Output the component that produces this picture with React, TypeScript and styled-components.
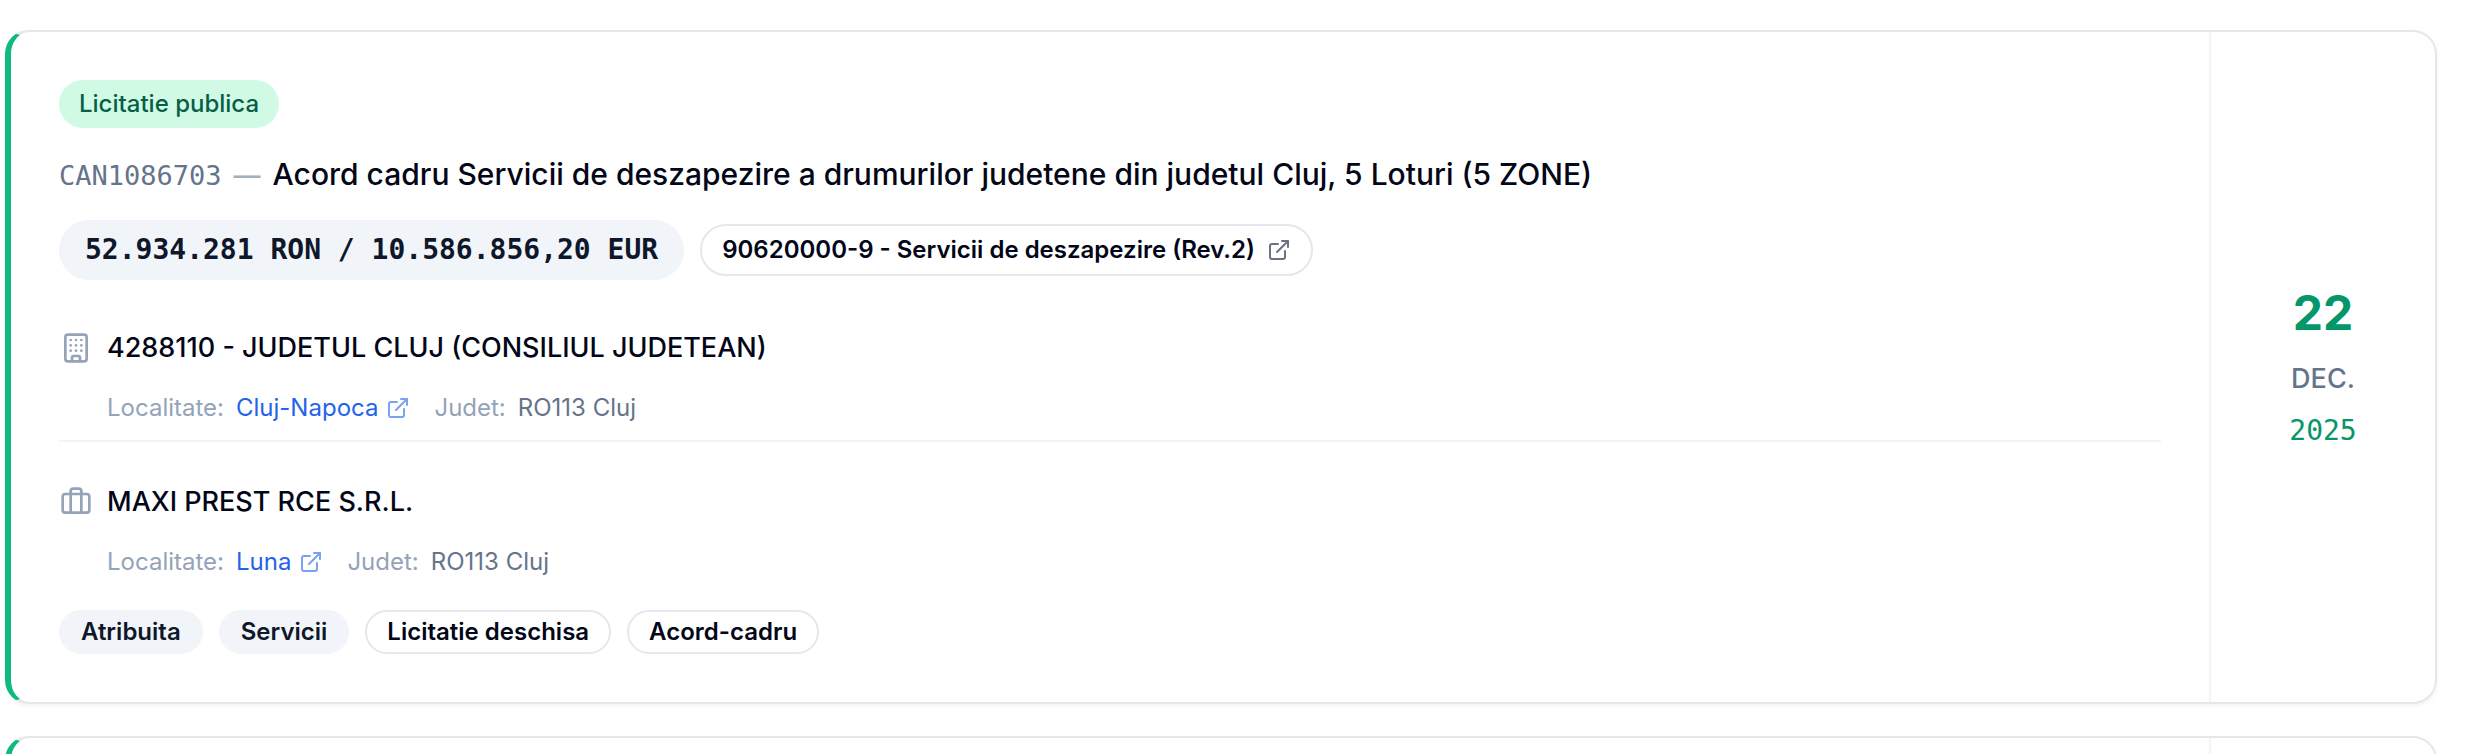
import React from "react";
import styled, { createGlobalStyle } from "styled-components";
import { Briefcase, Building, ExternalLink } from "lucide-react";

const mono = `"DejaVu Sans Mono", "Liberation Mono", monospace`;

const GlobalStyle = createGlobalStyle`
  *, *::before, *::after { box-sizing: border-box; }
  html { overflow: hidden; }
  body {
    margin: 0;
    background: #ffffff;
    color: #020617;
    font-family: Inter, "Liberation Sans", sans-serif;
    font-size: 24px;
    line-height: 32px;
  }
  h2, h3, dl, dd { margin: 0; }
`;

const List = styled.main`
  display: flex;
  flex-direction: column;
  gap: 32px;
  padding: 30px 43px 0 5px;
`;

const Card = styled.article`
  display: flex;
  background: #ffffff;
  border: 2px solid #e5e7eb;
  border-left: 6px solid #10b981;
  border-radius: 24px;
  box-shadow: 0 2px 4px rgba(0, 0, 0, 0.05);
`;

const Body = styled.div`
  flex: 1;
  min-width: 0;
  display: flex;
  flex-direction: column;
  padding: 48px;
`;

const TypeBadge = styled.span`
  align-self: flex-start;
  padding: 8px 20px;
  border-radius: 24px;
  background: #d1fae5;
  color: #065f46;
  font-weight: 500;
`;

const TitleRow = styled.div`
  display: flex;
  align-items: baseline;
  gap: 12px;
  margin: 24px 0;
`;

const Code = styled.span`
  font-family: ${mono};
  font-size: 27px;
  color: #64748b;
`;

const Dash = styled.span`
  font-size: 27px;
  font-weight: 500;
  color: #a3aebf;
`;

const Title = styled.h2`
  font-size: 30px;
  line-height: 44px;
  font-weight: 500;
`;

const Chips = styled.div<{ $top?: number; $bottom?: number }>`
  display: flex;
  flex-wrap: wrap;
  align-items: center;
  gap: 16px;
  margin-top: ${(p) => p.$top ?? 0}px;
  margin-bottom: ${(p) => p.$bottom ?? 0}px;
`;

const Amount = styled.span`
  padding: 10px 26px;
  border-radius: 30px;
  background: #f1f5f9;
  color: #0f172a;
  font-family: ${mono};
  font-size: 28px;
  line-height: 40px;
  font-weight: 600;
`;

const Tag = styled.span<{ $filled?: boolean }>`
  padding: 4px 20px;
  border: 2px solid ${(p) => (p.$filled ? "#f1f5f9" : "#e5e7eb")};
  border-radius: 22px;
  background: ${(p) => (p.$filled ? "#f1f5f9" : "#ffffff")};
  color: ${(p) => (p.$filled ? "#0f172a" : "#020617")};
  line-height: 32px;
  font-weight: 600;
`;

const CpvLink = styled.a`
  display: inline-flex;
  align-items: center;
  gap: 12px;
  padding: 8px 20px;
  border: 2px solid #e5e7eb;
  border-radius: 26px;
  color: #020617;
  font-weight: 600;
  text-decoration: none;
  svg { color: #6b7280; }
`;

const Party = styled.section<{ $divided?: boolean }>`
  display: grid;
  grid-template-columns: 34px 1fr;
  column-gap: 14px;
  row-gap: 24px;
  align-items: center;
  padding: 40px 0 ${(p) => (p.$divided ? 16 : 0)}px;
  border-bottom: ${(p) => (p.$divided ? "2px solid #f1f5f9" : "0")};
  > svg { justify-self: center; color: #94a3b8; }
`;

const PartyName = styled.h3`
  font-size: 27px;
  line-height: 40px;
  font-weight: 500;
`;

const Place = styled.dl`
  grid-column: 2;
  display: flex;
  gap: 24px;
  color: #94a3b8;
`;

const Field = styled.div`
  display: flex;
  gap: 12px;
  dd { color: #64748b; }
`;

const CityLink = styled.a`
  display: inline-flex;
  align-items: center;
  gap: 8px;
  color: #2563eb;
  text-decoration: none;
  svg { opacity: 0.6; }
`;

const DateColumn = styled.div`
  flex: 0 0 226px;
  display: flex;
  align-items: center;
  justify-content: center;
  border-left: 2px solid #f1f5f9;
`;

const AwardDate = styled.time`
  display: flex;
  flex-direction: column;
  align-items: center;
  gap: 12px;
  font-size: 28px;
  line-height: 40px;
  color: #059669;
`;

const Day = styled.span`
  padding-bottom: 4px;
  font-size: 48px;
  line-height: 60px;
  font-weight: 700;
`;

const Month = styled.span`
  font-size: 27px;
  font-weight: 500;
  color: #64748b;
`;

const Year = styled.span`
  font-family: ${mono};
`;

type PartyInfo = { name: string; city: string; county: string };

type Tender = {
  type: string;
  code: string;
  title: string;
  amount: string;
  cpv: string;
  buyer: PartyInfo;
  supplier: PartyInfo;
  tags: { label: string; filled?: boolean }[];
  date: { iso: string; day: string; month: string; year: string };
};

const tender: Tender = {
  type: "Licitatie publica",
  code: "CAN1086703",
  title: "Acord cadru Servicii de deszapezire a drumurilor judetene din judetul Cluj, 5 Loturi (5 ZONE)",
  amount: "52.934.281 RON / 10.586.856,20 EUR",
  cpv: "90620000-9 - Servicii de deszapezire (Rev.2)",
  buyer: { name: "4288110 - JUDETUL CLUJ (CONSILIUL JUDETEAN)", city: "Cluj-Napoca", county: "RO113 Cluj" },
  supplier: { name: "MAXI PREST RCE S.R.L.", city: "Luna", county: "RO113 Cluj" },
  tags: [
    { label: "Atribuita", filled: true },
    { label: "Servicii", filled: true },
    { label: "Licitatie deschisa" },
    { label: "Acord-cadru" },
  ],
  date: { iso: "2025-12-22", day: "22", month: "DEC.", year: "2025" },
};

function PartyBlock({ info, icon, divided }: { info: PartyInfo; icon: React.ReactNode; divided?: boolean }) {
  return (
    <Party $divided={divided}>
      {icon}
      <PartyName>{info.name}</PartyName>
      <Place>
        <Field>
          <dt>Localitate:</dt>
          <dd>
            <CityLink href="#">
              {info.city}
              <ExternalLink size={24} />
            </CityLink>
          </dd>
        </Field>
        <Field>
          <dt>Judet:</dt>
          <dd>{info.county}</dd>
        </Field>
      </Place>
    </Party>
  );
}

function TenderCard({ data }: { data: Tender }) {
  return (
    <Card>
      <Body>
        <TypeBadge>{data.type}</TypeBadge>
        <TitleRow>
          <Code>{data.code}</Code>
          <Dash>—</Dash>
          <Title>{data.title}</Title>
        </TitleRow>
        <Chips $bottom={8}>
          <Amount>{data.amount}</Amount>
          <CpvLink href="#">
            {data.cpv}
            <ExternalLink size={24} />
          </CpvLink>
        </Chips>
        <PartyBlock info={data.buyer} icon={<Building size={32} />} divided />
        <PartyBlock info={data.supplier} icon={<Briefcase size={32} />} />
        <Chips $top={32}>
          {data.tags.map((t) => (
            <Tag key={t.label} $filled={t.filled}>{t.label}</Tag>
          ))}
        </Chips>
      </Body>
      <DateColumn>
        <AwardDate dateTime={data.date.iso}>
          <Day>{data.date.day}</Day>
          <Month>{data.date.month}</Month>
          <Year>{data.date.year}</Year>
        </AwardDate>
      </DateColumn>
    </Card>
  );
}

/* Shell of the next result, shown while its data has not arrived. */
function PendingCard() {
  return (
    <Card aria-busy="true">
      <Body />
      <DateColumn />
    </Card>
  );
}

export default function App() {
  return (
    <>
      <GlobalStyle />
      <List>
        <TenderCard data={tender} />
        <PendingCard />
      </List>
    </>
  );
}
